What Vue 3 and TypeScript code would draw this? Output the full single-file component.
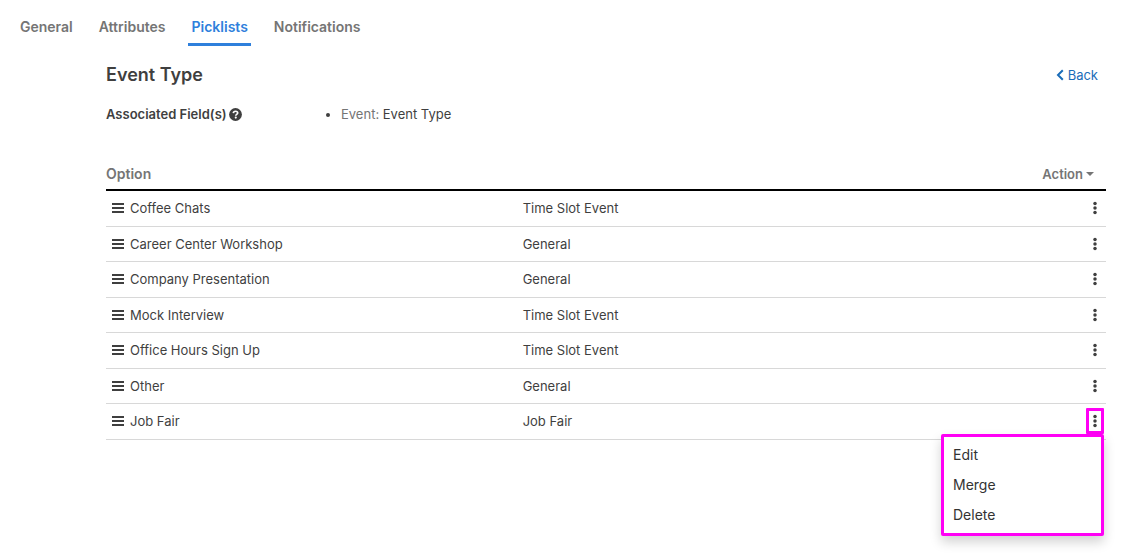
<script setup lang="ts">
import { ref } from 'vue'

interface Option {
  name: string
  type: string
}

const tabs: string[] = ['General', 'Attributes', 'Picklists', 'Notifications']
const activeTab = ref('Picklists')

const options: Option[] = [
  { name: 'Coffee Chats', type: 'Time Slot Event' },
  { name: 'Career Center Workshop', type: 'General' },
  { name: 'Company Presentation', type: 'General' },
  { name: 'Mock Interview', type: 'Time Slot Event' },
  { name: 'Office Hours Sign Up', type: 'Time Slot Event' },
  { name: 'Other', type: 'General' },
  { name: 'Job Fair', type: 'Job Fair' },
]

const menuItems: string[] = ['Edit', 'Merge', 'Delete']
const openMenu = ref<string | null>('Job Fair')

function toggleMenu(name: string) {
  openMenu.value = openMenu.value === name ? null : name
}
</script>

<template>
  <div class="page">
    <nav class="tabs">
      <a
        v-for="tab in tabs"
        :key="tab"
        href="#"
        class="tab"
        :class="{ active: tab === activeTab }"
        @click.prevent="activeTab = tab"
      >{{ tab }}</a>
    </nav>

    <main class="content">
      <header class="heading">
        <h1>Event Type</h1>
        <a href="#" class="back">
          <svg class="chevron" viewBox="0 0 8 12" aria-hidden="true">
            <path d="M6.8 1.2 2 6l4.8 4.8" fill="none" stroke="currentColor" stroke-width="2" />
          </svg>
          Back
        </a>
      </header>

      <section class="fields">
        <div class="fields-label">
          Associated Field(s)
          <svg class="help" viewBox="0 0 512 512" role="img" aria-label="Help">
            <circle cx="256" cy="256" r="252" fill="currentColor" />
            <path
              d="M170 205c5-50 38-78 86-78 50 0 86 29 86 72 0 54-74 52-74 100v8"
              fill="none"
              stroke="#fff"
              stroke-width="66"
            />
            <circle cx="267" cy="378" r="42" fill="#fff" />
          </svg>
        </div>
        <ul>
          <li><span class="muted">Event:</span> Event Type</li>
        </ul>
      </section>

      <table class="options">
        <thead>
          <tr>
            <th class="col-name" scope="col">Option</th>
            <th class="col-type" scope="col" aria-label="Type"></th>
            <th class="col-action" scope="col">
              <button type="button" class="action-head">
                Action
                <svg class="caret" viewBox="0 0 8 4" aria-hidden="true">
                  <path d="M0 0h8L4 4z" fill="currentColor" />
                </svg>
              </button>
            </th>
          </tr>
        </thead>
        <tbody>
          <tr v-for="option in options" :key="option.name">
            <td>
              <div class="name">
                <svg class="grip" viewBox="0 0 12 12" aria-hidden="true">
                  <path d="M0 2h12M0 6h12M0 10h12" stroke="currentColor" stroke-width="2" />
                </svg>
                {{ option.name }}
              </div>
            </td>
            <td>{{ option.type }}</td>
            <td>
              <div class="row-action">
                <button
                  type="button"
                  class="dots"
                  :class="{ open: openMenu === option.name }"
                  :aria-label="'Actions for ' + option.name"
                  @click="toggleMenu(option.name)"
                >
                  <svg viewBox="0 0 4 14" aria-hidden="true">
                    <circle cx="2" cy="2.6" r="1.75" fill="currentColor" />
                    <circle cx="2" cy="7" r="1.75" fill="currentColor" />
                    <circle cx="2" cy="11.4" r="1.75" fill="currentColor" />
                  </svg>
                </button>
                <div v-if="openMenu === option.name" class="menu">
                  <button v-for="item in menuItems" :key="item" type="button">{{ item }}</button>
                </div>
              </div>
            </td>
          </tr>
        </tbody>
      </table>
    </main>
  </div>
</template>

<style>
body {
  margin: 0;
  background: #fff;
}
</style>

<style scoped>
.page {
  min-height: 100vh;
  font-family: Inter, 'Liberation Sans', sans-serif;
  font-size: 13px;
  line-height: 20px;
  color: #3f3f3f;
}

button {
  margin: 0;
  padding: 0;
  border: 0;
  background: none;
  font: inherit;
  color: inherit;
  cursor: pointer;
}

.tabs {
  display: flex;
  gap: 20px;
  padding: 12px 17px 0;
}

.tab {
  padding: 5px 3px 6px;
  border-bottom: 3px solid transparent;
  font-size: 14px;
  font-weight: 600;
  color: #757575;
  text-decoration: none;
}

.tab.active {
  color: #2f80dc;
  border-bottom-color: #2f80dc;
}

.content {
  margin: 17px 16px 0 106px;
}

.heading {
  display: flex;
  align-items: center;
  justify-content: space-between;
}

h1 {
  margin: 0;
  font-size: 18px;
  line-height: 24px;
  font-weight: 600;
}

.back {
  display: flex;
  align-items: center;
  gap: 4px;
  padding-right: 8px;
  color: #1a6cb8;
  text-decoration: none;
}

.chevron {
  width: 8px;
  height: 12px;
}

.fields {
  display: flex;
  margin-top: 17px;
}

.fields-label {
  display: flex;
  align-items: center;
  gap: 2px;
  width: 20%;
  font-weight: 600;
}

.help {
  width: 13px;
  height: 13px;
}

ul {
  margin: 0;
  padding-left: 35px;
}

.muted {
  color: #757575;
}

.options {
  width: 100%;
  margin-top: 38px;
  border-collapse: separate;
  border-spacing: 0;
  table-layout: fixed;
}

th {
  height: 25px;
  padding: 2px 0 0;
  border-bottom: 2px solid #000;
  font-size: 14px;
  font-weight: 600;
  color: #757575;
  text-align: left;
  vertical-align: top;
}

.col-name,
.col-type {
  width: calc(100% * 5 / 12);
}

.action-head {
  display: flex;
  align-items: center;
  gap: 3px;
  margin-left: auto;
  padding-right: 12px;
  font-size: 13px;
}

.caret {
  width: 8px;
  height: 4px;
}

td {
  height: 34px;
  padding: 0;
  border-bottom: 1px solid #d8d8d8;
}

tbody tr:nth-child(odd) td {
  padding-bottom: 1px;
}

.name {
  display: flex;
  align-items: center;
  gap: 6px;
  padding-left: 6px;
}

.grip {
  width: 12px;
  height: 12px;
}

.row-action {
  position: relative;
  display: flex;
  justify-content: flex-end;
  padding-right: 2px;
}

.dots {
  display: flex;
  align-items: center;
  justify-content: center;
  box-sizing: border-box;
  width: 18px;
  height: 26px;
  border: 3px solid transparent;
}

.dots.open {
  border-color: #ff00f5;
  border-radius: 1px;
}

.dots svg {
  flex: none;
  width: 4px;
  height: 14px;
}

.menu {
  position: absolute;
  z-index: 1;
  top: 100%;
  right: 2px;
  display: flex;
  flex-direction: column;
  box-sizing: border-box;
  width: 163px;
  padding: 3px 0;
  border: 3px solid #ff00f5;
  border-radius: 2px;
  background: #fff;
  box-shadow: 0 6px 12px rgba(0, 0, 0, 0.18);
}

.menu button {
  padding: 5px 9px;
  font-size: 14px;
  text-align: left;
  color: #333;
}
</style>
